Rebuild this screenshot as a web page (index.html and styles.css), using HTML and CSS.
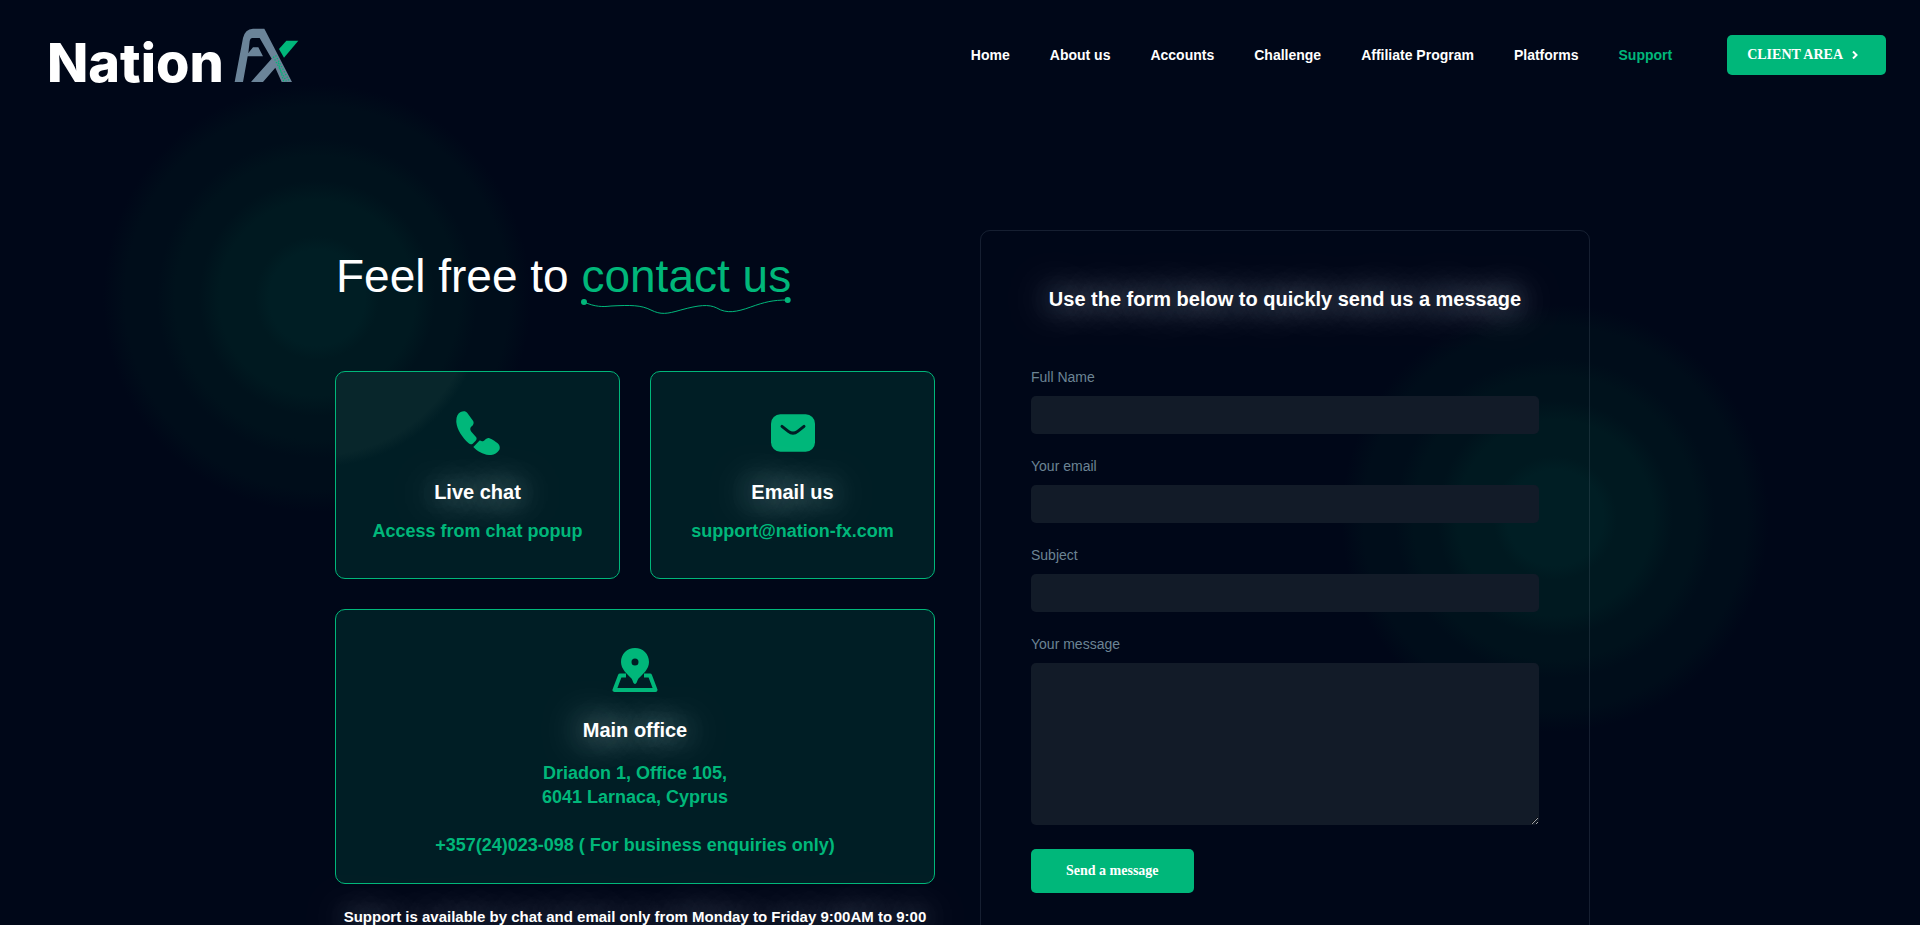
FILE: index.html
```html
<!DOCTYPE html>
<html lang="en">
  <head>
    <meta charset="UTF-8" />
    <meta name="viewport" content="width=device-width, initial-scale=1.0" />
    <title>Nation FX - Support</title>
    <link rel="stylesheet" href="styles.css" />
  </head>

  <body>
    <header class="header">
      <a class="logo" href="#">
        <span class="logo-text">Nation</span>
        <svg class="logo-mark" viewBox="0 0 198 165" aria-hidden="true">
          <path
            class="mark-gray"
            fill-rule="evenodd"
            d="M5 162 L30 30 Q36 3 60 2 H94 L177 162 H146 L127 119 L90 162 H54 L116 92 L80 30 H58 Q52 30 50 40 L46 75 L60 58 H76 L90 85 H44 L30 162 Z"
          />
          <path class="mark-green" d="M138 63 L160 38 H196 L153 89 Z" />
          <path class="mark-dots" d="M121 86 L160 160 M128 82 L169 160 M136 104 L152 160" />
        </svg>
      </a>

      <nav class="nav">
        <a href="#">Home</a>
        <a href="#">About us</a>
        <a href="#">Accounts</a>
        <a href="#">Challenge</a>
        <a href="#">Affiliate Program</a>
        <a href="#">Platforms</a>
        <a href="#" class="active">Support</a>
      </nav>

      <a class="client-button" href="#">
        CLIENT AREA
        <svg class="chevron" viewBox="0 0 6 8" aria-hidden="true">
          <path d="M1 0.5 L4.5 4 L1 7.5" />
        </svg>
      </a>
    </header>

    <main class="contact">
      <section class="info">
        <h1>
          Feel free to
          <span class="highlight"
            >contact us
            <svg class="squiggle" viewBox="0 0 210 20" aria-hidden="true">
              <circle cx="3" cy="5" r="3" />
              <circle cx="207" cy="3" r="3" />
              <path
                d="M3 5 C14 10 22 10 30 9 C50 8 60 8 70 13 C80 18 86 17 100 13 C118 8 128 7 136 11 C146 17 156 15 170 10 C184 5 192 3 207 3"
              />
            </svg>
          </span>
        </h1>

        <div class="cards">
          <div class="card card-lit">
            <svg class="icon" viewBox="0 0 132 132" aria-hidden="true">
              <path
                d="M14 3 C22 -1 30 0 34 6 L51 29 C55 35 52 42 47 46 C42 51 41 55 46 62 L60 78 C63 82 62 86 59 89 L50 98 C46 101 42 100 38 97 C18 79 3 55 1 34 C0 18 5 7 14 3 Z"
              />
              <path
                d="M52 108 L70 89 C74 86 77 92 81 91 C87 88 91 80 98 81 C104 82 118 91 125 97 C132 103 133 112 129 118 C123 128 112 133 99 132 C80 130 64 121 52 108 Z"
              />
            </svg>
            <h2>Live chat</h2>
            <p>Access from chat popup</p>
          </div>

          <div class="card">
            <svg class="icon" viewBox="0 0 132 132" aria-hidden="true">
              <rect x="0" y="10" width="132" height="112" rx="28" />
              <path class="flap" d="M33 46 L52 61 Q66 72 80 61 L99 46" />
            </svg>
            <h2>Email us</h2>
            <p>support@nation-fx.com</p>
          </div>

          <div class="card office">
            <svg class="icon" viewBox="0 0 46 44" aria-hidden="true">
              <path
                fill-rule="evenodd"
                d="M23 0 C31 0 37 6 37 14 C37 21 31 26 27 30 C25 32 25 36 23 36 C21 36 21 32 19 30 C15 26 9 21 9 14 C9 6 15 0 23 0 Z M23 10.5 A3.5 3.5 0 1 0 23 17.5 A3.5 3.5 0 1 0 23 10.5 Z"
              />
              <path class="tray" d="M14 27.5 H8 L2.5 42 H43.5 L38 27.5 H32" />
            </svg>
            <h2>Main office</h2>
            <p>
              Driadon 1, Office 105,<br />
              6041 Larnaca, Cyprus<br />
              <br />
              +357(24)023-098 ( For business enquiries only)
            </p>
          </div>
        </div>

        <p class="hours">
          Support is available by chat and email only from Monday to Friday
          9:00AM to 9:00
        </p>
      </section>

      <form class="contact-form">
        <h2>Use the form below to quickly send us a message</h2>
        <div class="form-group">
          <label for="fullName">Full Name</label>
          <input type="text" id="fullName" name="fullName" />
        </div>
        <div class="form-group">
          <label for="email">Your email</label>
          <input type="email" id="email" name="email" />
        </div>
        <div class="form-group">
          <label for="subject">Subject</label>
          <input type="text" id="subject" name="subject" />
        </div>
        <div class="form-group">
          <label for="message">Your message</label>
          <textarea id="message" name="message"></textarea>
        </div>
        <button type="submit" class="send-button">Send a message</button>
      </form>
    </main>
  </body>
</html>
```

FILE: styles.css
```css
:root {
  --primary-color: #00b77a;
  --background: #000718;
  --card-bg: #001e25;
  --input-bg: #121b28;
  --label-color: #6c8494;
  --glow: 0 0 40px rgba(245, 250, 255, 0.9), 0 0 30px rgba(220, 255, 250, 0.4);
}

* {
  box-sizing: border-box;
}

body {
  margin: 0;
  font-family: "Liberation Sans", Arial, sans-serif;
  color: #fff;
  background-color: var(--background);
}

h1,
h2,
p {
  margin: 0;
}

a {
  color: inherit;
  text-decoration: none;
}

/* Header */
.header {
  display: flex;
  align-items: center;
  height: 110px;
  padding: 0 34px 0 47px;
}

.logo {
  display: flex;
  align-items: flex-end;
  gap: 9px;
  margin-right: auto;
}

.logo-text {
  font-family: Inter, sans-serif;
  font-size: 54px;
  font-weight: 800;
  line-height: 40px;
}

.logo-mark {
  width: 66px;
  height: 55px;
}

.mark-gray {
  fill: #6b8499;
}

.mark-green {
  fill: var(--primary-color);
}

.mark-dots {
  fill: none;
  stroke: var(--primary-color);
  stroke-width: 4;
  stroke-dasharray: 4 5;
}

.nav {
  display: flex;
  gap: 40px;
  margin-right: 55px;
  font-size: 14px;
  font-weight: 700;
  line-height: 20px;
}

.nav .active {
  color: var(--primary-color);
}

.client-button {
  display: flex;
  align-items: center;
  gap: 9px;
  height: 40px;
  padding: 0 28px 0 20px;
  border-radius: 5px;
  background-color: var(--primary-color);
  font-family: "Liberation Serif", serif;
  font-size: 14px;
  font-weight: 700;
}

.chevron {
  width: 6px;
  height: 8px;
  fill: none;
  stroke: #fff;
  stroke-width: 2;
}

/* Contact section */
.contact {
  position: relative;
  display: grid;
  grid-template-columns: 600fr 610fr;
  align-items: start;
  gap: 45px;
  max-width: 1320px;
  margin: 0 auto;
  padding: 120px 30px 60px 35px;
}

/* Green halos behind both columns */
.contact::before,
.contact::after {
  content: "";
  position: absolute;
  z-index: -1;
  width: 430px;
  height: 430px;
  border-radius: 50%;
  background: radial-gradient(
    closest-side,
    #001e24 48px,
    #001920 62px,
    #001920 98px,
    #00121c 118px,
    #00121c 142px,
    #000d1a 160px,
    #000d1a 192px,
    transparent 214px
  );
}

.contact::before {
  top: -27px;
  left: -198px;
}

.contact::after {
  top: 193px;
  right: -150px;
}

.info {
  padding-top: 16px;
}

.info h1 {
  margin-bottom: 65px;
  padding-left: 1px;
  font-size: 46px;
  font-weight: 400;
  line-height: 60px;
}

.highlight {
  position: relative;
  color: var(--primary-color);
}

.squiggle {
  position: absolute;
  left: 0;
  bottom: -15px;
  width: 100%;
  height: 20px;
  fill: var(--primary-color);
}

.squiggle path {
  fill: none;
  stroke: var(--primary-color);
}

.cards {
  display: grid;
  grid-template-columns: 1fr 1fr;
  gap: 30px;
}

.card {
  padding: 39px 20px 35px;
  border: 1px solid var(--primary-color);
  border-radius: 10px;
  background-color: var(--card-bg);
  text-align: center;
}

/* Halo showing through the corner of the card */
.card-lit {
  background-image: radial-gradient(
    circle at -18px -73px,
    #08262b 156px,
    transparent 168px
  );
}

.icon {
  display: block;
  width: 44px;
  height: 44px;
  margin: 0 auto 25px;
  fill: var(--primary-color);
}

.icon .flap {
  fill: none;
  stroke: var(--card-bg);
  stroke-width: 9;
  stroke-linecap: round;
}

.icon .tray {
  fill: none;
  stroke: var(--primary-color);
  stroke-width: 4;
  stroke-linejoin: round;
}

.card h2,
.contact-form h2 {
  font-size: 20px;
  line-height: 24px;
  text-align: center;
  text-shadow: var(--glow);
}

.card p {
  margin-top: 15px;
  color: var(--primary-color);
  font-size: 18px;
  font-weight: 700;
  line-height: 24px;
}

.office {
  grid-column: span 2;
  padding: 38px 20px 26px;
}

.office .icon {
  width: 46px;
  margin-bottom: 26px;
}

.office p {
  margin-top: 19px;
}

.hours {
  margin-top: 21px;
  font-size: 15px;
  font-weight: 700;
  line-height: 24px;
  text-align: center;
  text-shadow: var(--glow);
}

/* Form */
.contact-form {
  padding: 56px 50px 50px;
  border: 1px solid rgba(108, 132, 148, 0.2);
  border-radius: 10px;
}

.contact-form h2 {
  margin-bottom: 56px;
}

.form-group {
  margin-bottom: 22px;
}

label {
  display: block;
  margin-bottom: 9px;
  color: var(--label-color);
  font-size: 14px;
  line-height: 20px;
}

input,
textarea {
  display: block;
  width: 100%;
  height: 38px;
  padding: 8px 12px;
  border: none;
  border-radius: 5px;
  background-color: var(--input-bg);
  color: #fff;
  font-family: inherit;
  font-size: 14px;
}

textarea {
  height: 162px;
  resize: vertical;
}

input:focus,
textarea:focus {
  outline: 1px solid var(--primary-color);
}

.send-button {
  display: block;
  height: 44px;
  margin-top: 24px;
  padding: 0 35px;
  border: none;
  border-radius: 5px;
  background-color: var(--primary-color);
  color: #fff;
  font-family: "Liberation Serif", serif;
  font-size: 14px;
  font-weight: 700;
  cursor: pointer;
}

@media (max-width: 1100px) {
  .contact {
    grid-template-columns: 1fr;
  }
}
```
